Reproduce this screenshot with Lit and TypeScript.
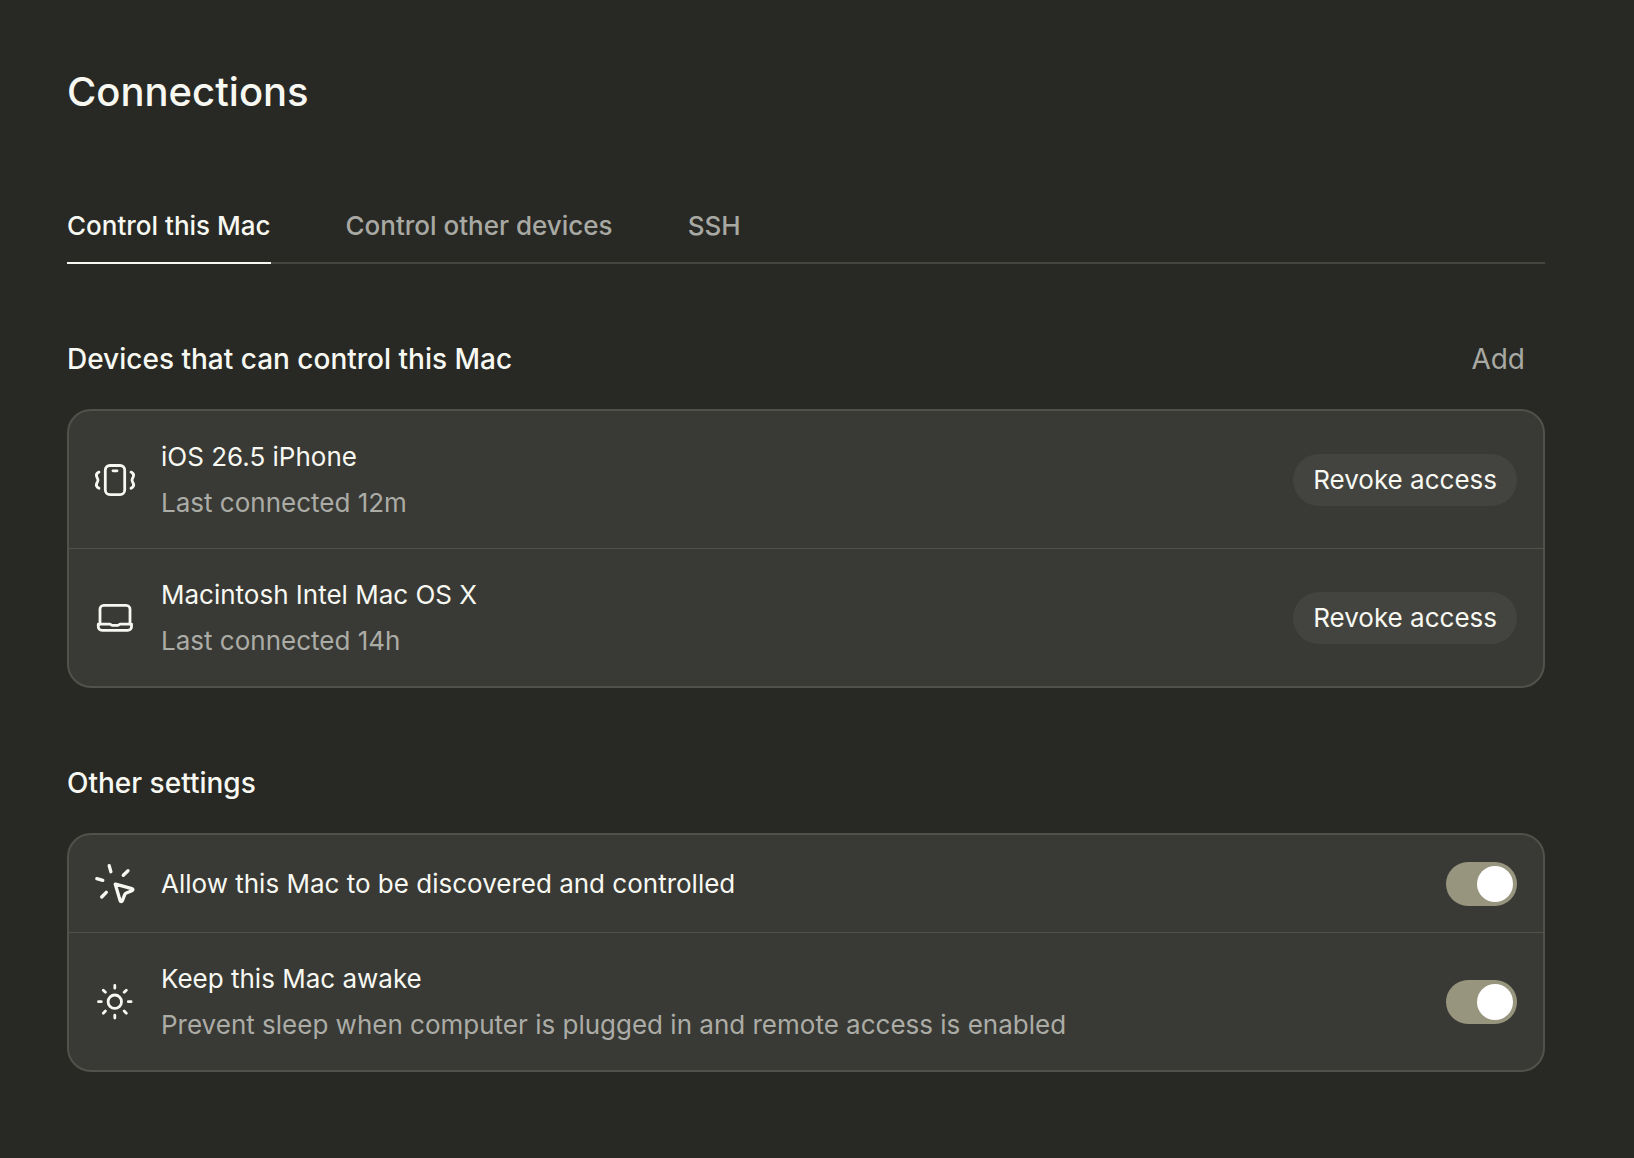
import { LitElement, html, css, svg, nothing } from "lit";
import type { SVGTemplateResult } from "lit";
import { customElement, state } from "lit/decorators.js";
import { classMap } from "lit/directives/class-map.js";

const icons: Record<string, SVGTemplateResult> = {
  phone: svg`
    <rect x="10.3" y="6" width="19.4" height="29.2" rx="4.6" />
    <path d="M18 11.3h4" />
    <path d="M4 12.6C1.6 13.8.8 15.2 1.7 17.2l1 2.2c.4.8.4 1.6 0 2.4l-1 2.1C.8 26 1.6 27.6 4 28.8" />
    <path d="M36 12.6c2.4 1.2 3.2 2.6 2.3 4.6l-1 2.2c-.4.8-.4 1.6 0 2.4l1 2.1c.9 2.1.1 3.7-2.3 4.9" />
  `,
  laptop: svg`
    <path d="M5 26.4V11.6a3.8 3.8 0 0 1 3.8-3.8h22.4a3.8 3.8 0 0 1 3.8 3.8v14.8" />
    <path d="M3.3 26.6h11.5c1 0 1.4 1.3 2.6 1.3h5.2c1.2 0 1.6-1.3 2.6-1.3h11.3v2.6a3.7 3.7 0 0 1-3.7 3.7H7a3.7 3.7 0 0 1-3.7-3.7z" />
  `,
  pointer: svg`
    <g stroke-width="3.3">
      <path d="M14.2 2.2l1.7 6M33 7.2l-4.7 4.6M1.8 15.2l6 1.7M11.3 28.8l-4.6 4.7" />
      <path d="M20.6 20.6l16.2 4.6c1.5.4 1.5 1.500.1 2.100l-5.600 2.200c-.8.3-1.3.8-1.600 1.600l-2.300 6c-.6 1.400-1.900 1.300-2.300-.1l-4.800-16.100c-.1-.3.1-.4.3-.3z" />
    </g>
  `,
  sun: svg`
    <circle cx="19.8" cy="20.2" r="6.7" />
    <path d="M19.8 3.9v2.8M19.8 33.7v2.8M3.5 20.2h2.8M33.3 20.2h2.8M8.3 8.7l2.1 2.1M29.2 29.6l2.1 2.1M8.3 31.7l2.1-2.1M29.2 10.8l2.1-2.1" />
  `,
};

interface Device {
  icon: string;
  name: string;
  seen: string;
}

interface Setting {
  id: string;
  icon: string;
  title: string;
  note?: string;
  on: boolean;
}

@customElement("app-root")
export class AppRoot extends LitElement {
  static styles = css`
    :host {
      display: block;
      min-height: 100vh;
      box-sizing: border-box;
      padding: 64px 89px 86px 67px;
      background: #282924;
      color: #f8f8f2;
      font-family: Inter, "Liberation Sans", sans-serif;
      font-size: 26px;
      line-height: 40px;
    }
    * {
      box-sizing: border-box;
    }
    h1,
    h2,
    p,
    ul {
      margin: 0;
      padding: 0;
    }
    button {
      margin: 0;
      border: 0;
      background: none;
      color: inherit;
      font: inherit;
      cursor: pointer;
      white-space: nowrap;
    }
    .title {
      font-size: 40px;
      line-height: 56px;
      font-weight: 500;
    }
    .tabs {
      display: flex;
      gap: 75px;
      margin-top: 86px;
      box-shadow: inset 0 -2px #454640;
    }
    .tab {
      padding: 0 0 16px;
      border-bottom: 2px solid transparent;
      color: #a9a9a4;
      font-weight: 500;
    }
    .tab.active {
      border-color: #f8f8f2;
      color: #f8f8f2;
    }
    .head {
      display: flex;
      align-items: center;
      justify-content: space-between;
      margin-top: 75px;
      padding-right: 20px;
      font-size: 28px;
    }
    .heading {
      font-size: 28px;
      font-weight: 500;
    }
    .add {
      padding: 0;
      color: #a9a9a4;
    }
    .card {
      margin-top: 30px;
      border: 2px solid #51524c;
      border-radius: 24px;
      background: #393a35;
      list-style: none;
      overflow: hidden;
    }
    .row {
      display: flex;
      align-items: center;
      gap: 26px;
      min-height: 97px;
      padding: 26px 26px 25px;
    }
    .row + .row {
      border-top: 1px solid #51524c;
    }
    .icon {
      flex: none;
      width: 40px;
      height: 40px;
      fill: none;
      stroke: currentColor;
      stroke-width: 2.8;
      stroke-linecap: round;
      stroke-linejoin: round;
      overflow: visible;
    }
    .text {
      display: grid;
      flex: 1;
      gap: 6px;
      min-width: 0;
    }
    .note {
      color: #acaca7;
    }
    .pill {
      flex: none;
      height: 52px;
      padding: 0 20px;
      border-radius: 26px;
      background: #43443f;
    }
    .switch {
      appearance: none;
      display: flex;
      flex: none;
      width: 71px;
      height: 44px;
      margin: 0;
      padding: 4px;
      border-radius: 22px;
      background: #5a5b54;
      cursor: pointer;
    }
    .switch::before {
      content: "";
      width: 36px;
      height: 36px;
      border-radius: 50%;
      background: #ffffff;
    }
    .switch:checked {
      justify-content: flex-end;
      background: #98957f;
    }
  `;

  private tabs = ["Control this Mac", "Control other devices", "SSH"];

  @state() private activeTab = 0;

  @state() private devices: Device[] = [
    { icon: "phone", name: "iOS 26.5 iPhone", seen: "Last connected 12m" },
    { icon: "laptop", name: "Macintosh Intel Mac OS X", seen: "Last connected 14h" },
  ];

  @state() private settings: Setting[] = [
    {
      id: "discover",
      icon: "pointer",
      title: "Allow this Mac to be discovered and controlled",
      on: true,
    },
    {
      id: "awake",
      icon: "sun",
      title: "Keep this Mac awake",
      note: "Prevent sleep when computer is plugged in and remote access is enabled",
      on: true,
    },
  ];

  private icon(name: string) {
    return html`<svg class="icon" viewBox="0 0.5 40 40" aria-hidden="true">${icons[name]}</svg>`;
  }

  private revoke(device: Device) {
    this.devices = this.devices.filter((d) => d !== device);
  }

  private toggle(id: string) {
    this.settings = this.settings.map((s) => (s.id === id ? { ...s, on: !s.on } : s));
  }

  render() {
    return html`
      <main>
        <h1 class="title">Connections</h1>
        <div class="tabs" role="tablist">
          ${this.tabs.map(
            (label, i) => html`<button
              class=${classMap({ tab: true, active: i === this.activeTab })}
              role="tab"
              aria-selected=${i === this.activeTab ? "true" : "false"}
              @click=${() => (this.activeTab = i)}
            >${label}</button>`
          )}
        </div>

        <section>
          <div class="head">
            <h2 class="heading">Devices that can control this Mac</h2>
            <button class="add">Add</button>
          </div>
          <ul class="card">
            ${this.devices.map(
              (d) => html`<li class="row">
                ${this.icon(d.icon)}
                <div class="text">
                  <p>${d.name}</p>
                  <p class="note">${d.seen}</p>
                </div>
                <button class="pill" @click=${() => this.revoke(d)}>Revoke access</button>
              </li>`
            )}
          </ul>
        </section>

        <section>
          <div class="head">
            <h2 class="heading">Other settings</h2>
          </div>
          <div class="card">
            ${this.settings.map(
              (s) => html`<div class="row">
                ${this.icon(s.icon)}
                <div class="text">
                  <label for=${s.id}>${s.title}</label>
                  ${s.note ? html`<p class="note">${s.note}</p>` : nothing}
                </div>
                <input
                  class="switch"
                  type="checkbox"
                  role="switch"
                  id=${s.id}
                  .checked=${s.on}
                  @change=${() => this.toggle(s.id)}
                />
              </div>`
            )}
          </div>
        </section>
      </main>
    `;
  }
}
